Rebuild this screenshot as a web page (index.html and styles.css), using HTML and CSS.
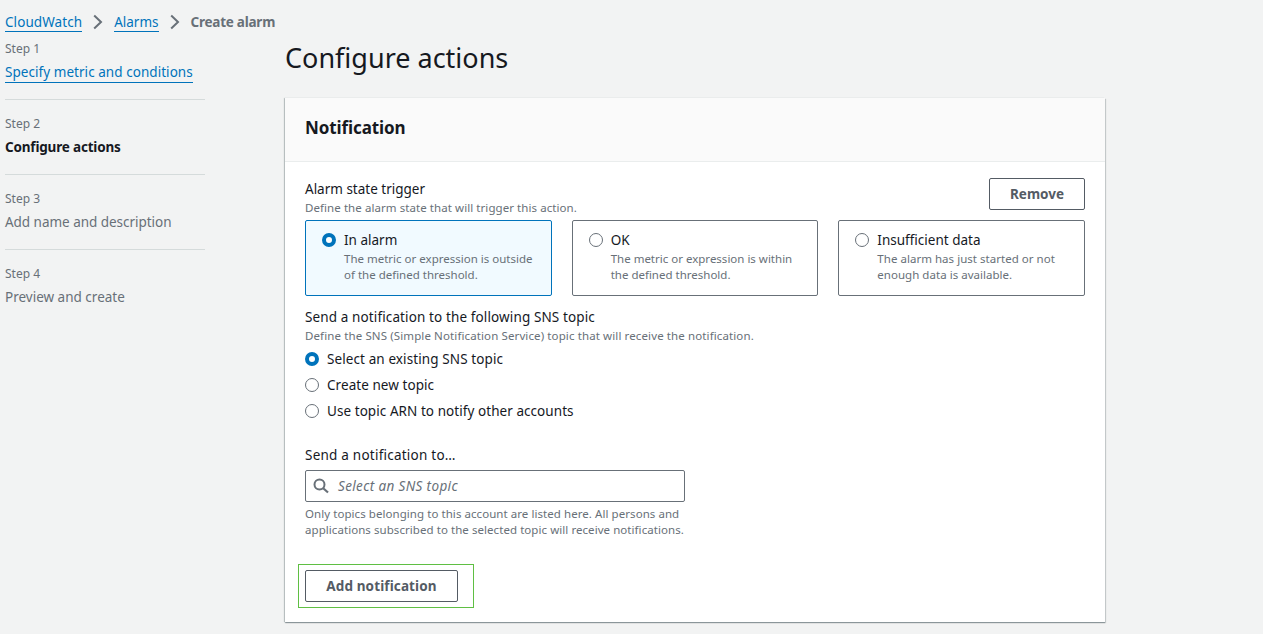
FILE: index.html
```html
<!DOCTYPE html>
<html lang="en">
<head>
<meta charset="utf-8">
<title>Configure actions</title>
<link rel="stylesheet" href="styles.css">
</head>
<body>
<div class="page">
  <aside class="side">
    <nav class="crumbs">
      <a class="link w-cloud" href="#">CloudWatch</a>
      <svg class="chev" viewBox="0 0 10 16"><path d="M1.200 1.500 8 8l-6.800 6.500" fill="none" stroke="#687078" stroke-width="2"/></svg>
      <a class="link w-alarms" href="#">Alarms</a>
      <svg class="chev" viewBox="0 0 10 16"><path d="M1.200 1.500 8 8l-6.800 6.500" fill="none" stroke="#687078" stroke-width="2"/></svg>
      <b class="here">Create alarm</b>
    </nav>
    <ol class="steps">
      <li class="step"><small class="num">Step 1</small><a class="link s1" href="#">Specify metric and conditions</a></li>
      <li class="step"><small class="num">Step 2</small><b class="current">Configure actions</b></li>
      <li class="step"><small class="num">Step 3</small><span class="s3">Add name and description</span></li>
      <li class="step"><small class="num">Step 4</small><span class="s4">Preview and create</span></li>
    </ol>
  </aside>
  <main class="main">
    <h1 class="title">Configure actions</h1>
    <section class="card">
      <header class="card-head"><h2 class="card-title">Notification</h2></header>
      <div class="card-body">
        <div class="row">
          <div class="field">
            <div class="label l-trigger">Alarm state trigger</div>
            <div class="hint h-trigger">Define the alarm state that will trigger this action.</div>
          </div>
          <button class="btn remove"><span>Remove</span></button>
        </div>
        <div class="tiles">
          <div class="tile on"><i class="radio on"></i><div><div class="label">In alarm</div><div class="hint t1">The metric or expression is outside<br>of the defined threshold.</div></div></div>
          <div class="tile"><i class="radio"></i><div><div class="label">OK</div><div class="hint t2">The metric or expression is within<br>the defined threshold.</div></div></div>
          <div class="tile"><i class="radio"></i><div><div class="label l-ins">Insufficient data</div><div class="hint t3">The alarm has just started or not<br>enough data is available.</div></div></div>
        </div>
        <div class="topic">
          <div class="label l-send">Send a notification to the following SNS topic</div>
          <div class="hint h-send">Define the SNS (Simple Notification Service) topic that will receive the notification.</div>
        </div>
        <div class="options">
          <div class="option"><i class="radio on"></i><div class="label o1">Select an existing SNS topic</div></div>
          <div class="option"><i class="radio"></i><div class="label o2">Create new topic</div></div>
          <div class="option"><i class="radio"></i><div class="label o3">Use topic ARN to notify other accounts</div></div>
        </div>
        <div class="label l-to">Send a notification to…</div>
        <div class="search">
          <svg class="glass" viewBox="0 0 16 16"><circle cx="6.500" cy="6.500" r="5" fill="none" stroke="#687078" stroke-width="2"/><path d="m10.200 10.200 4.800 4.300" stroke="#687078" stroke-width="2.200"/></svg>
          <span class="placeholder">Select an SNS topic</span>
        </div>
        <div class="hint h-only">Only topics belonging to this account are listed here. All persons and<br>applications subscribed to the selected topic will receive notifications.</div>
        <div class="highlight"><button class="btn add"><span>Add notification</span></button></div>
      </div>
    </section>
  </main>
</div>
</body>
</html>
```
FILE: styles.css
```css
* { box-sizing: border-box; }
body {
  margin: 0;
  height: 634px;
  overflow: hidden;
  background: #f2f3f3;
  color: #16191f;
  font: 13.5px/20px "Noto Sans", "Open Sans", sans-serif;
}
.page { display: flex; white-space: nowrap; }
.side { width: 285px; padding: 12px 0 0 5px; }
.crumbs { display: flex; align-items: center; height: 20px; }
.link { color: #0073bb; text-decoration: none; border-bottom: 1px solid #0073bb; line-height: 18px; }
.w-cloud { letter-spacing: .08px; }
.chev { width: 10px; height: 16px; margin: 0 11px; }
.here { color: #687078; letter-spacing: -.24px; }
.steps { list-style: none; margin: 7px 0 0; padding: 0; width: 200px; }
.step { height: 75px; display: flex; flex-direction: column; align-items: flex-start; color: #687078; }
.step:not(:last-child) { height: 61px; border-bottom: 1px solid #d5dbdb; margin-bottom: 14px; }
.num { font-size: 12px; line-height: 20px; margin-bottom: 3px; }
.s1 { letter-spacing: .05px; line-height: 20px; }
.s3 { letter-spacing: -.03px; }
.current { color: #16191f; letter-spacing: -.18px; }
.main { width: 820px; padding-top: 40px; }
.title { margin: 0; font-size: 27px; line-height: 36px; font-weight: 400; }
.card { margin-top: 22px; height: 524px; background: #fff; box-shadow: 0 1px 1px rgba(0,28,36,.3), 1px 1px 1px rgba(0,28,36,.15), -1px 0 1px rgba(0,28,36,.2); }
.card-head { height: 64px; padding: 19px 20px; background: #fafafa; border-bottom: 1px solid #eaeded; }
.card-title { margin: 0; font-size: 17px; line-height: 22px; font-weight: 700; letter-spacing: -.1px; }
.card-body { padding: 16px 20px 0; }
.row { display: flex; justify-content: space-between; height: 42px; }
.label { line-height: 22px; }
.hint { font-size: 11.5px; line-height: 16px; color: #687078; }
.h-trigger { letter-spacing: .07px; }
.t3 { letter-spacing: .03px; }
.l-send { letter-spacing: .12px; }
.h-send { letter-spacing: .115px; }
.o1 { letter-spacing: .1px; }
.o2 { letter-spacing: .06px; }
.o3 { letter-spacing: .06px; }
.h-only { letter-spacing: .06px; }
.btn { height: 32px; padding: 0; border: 1px solid #545b64; border-radius: 2px; background: #fff; color: #545b64; font: 700 13.5px/20px "Noto Sans", sans-serif; }
.remove { width: 96px; }
.tiles { display: grid; grid-template-columns: repeat(3, 1fr); gap: 20px; }
.tile { height: 76px; padding: 8px 16px; border: 1px solid #687078; border-radius: 2px; display: flex; gap: 8px; }
.tile.on { background: #f1faff; border-color: #0073bb; }
.radio { flex: none; width: 14px; height: 14px; margin-top: 4px; border: 1px solid #687078; border-radius: 50%; background: #fff; }
.radio.on { border: 4px solid #0073bb; }
.topic { margin-top: 10px; }
.options { margin-top: 4px; }
.option { display: flex; gap: 8px; height: 26px; }
.l-to { margin-top: 18px; letter-spacing: .23px; }
.search { display: flex; align-items: center; width: 380px; height: 32px; margin: 4px 0; padding-left: 7px; gap: 9px; border: 1px solid #687078; border-radius: 2px; }
.glass { width: 16px; height: 16px; }
.placeholder { font-style: italic; color: #687078; letter-spacing: .36px; }
.highlight { width: 176px; height: 44px; margin: 26px 0 0 -7px; padding: 5px 6px; border: 1px solid #5fbf43; }
.add { width: 153px; letter-spacing: .12px; }
```
